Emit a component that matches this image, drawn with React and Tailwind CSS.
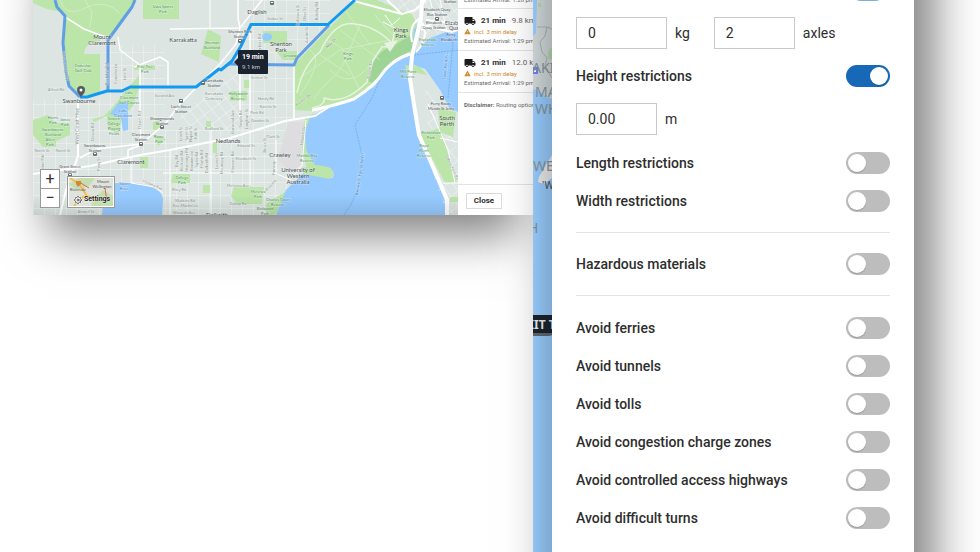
import { MdLocalShipping, MdWarning } from "react-icons/md";
import { FiSettings } from "react-icons/fi";

const STREET = "#8b9492";
const GREEN = "#4e8f63";
const PLACE = "#464c50";
const WATER = "#3f7fb8";

// x, y, size, colour, lines, rotation
const labels = [
  [102, 39, 6, PLACE, ["Mount", "Claremont"]],
  [79, 103, 6, PLACE, ["Swanbourne"]],
  [183, 42, 6, PLACE, ["Karrakatta"]],
  [257, 14, 6, PLACE, ["Daglish"]],
  [281, 46, 6, PLACE, ["Shenton", "Park"]],
  [401, 32, 6, PLACE, ["Kings", "Park"]],
  [131, 164, 6, PLACE, ["Claremont"]],
  [228, 143, 6, PLACE, ["Nedlands"]],
  [280, 157, 6, PLACE, ["Crawley"]],
  [298, 172, 6, PLACE, ["University of", "Western", "Australia"]],
  [447, 120, 6, PLACE, ["South", "Perth"]],
  [163, 8, 4, GREEN, ["Uwa Sports", "Park"]],
  [83, 67, 4, GREEN, ["Cottesloe", "Golf Club"]],
  [145, 68, 4, GREEN, ["Pine Tree", "Park"]],
  [129, 94, 4, GREEN, ["Lake", "Claremont", "Golf Course"]],
  [53, 119, 4, GREEN, ["Harris", "Park"]],
  [65, 121, 4, GREEN, ["Jones", "Park"]],
  [53, 131, 4, GREEN, ["Swanbourne", "Bushland"]],
  [50, 141, 4, GREEN, ["Allen", "Park"]],
  [114, 120, 4, GREEN, ["Scotch", "College", "Playing", "Fields"]],
  [159, 138, 4, GREEN, ["Rowe", "Park"]],
  [212, 44, 4, GREEN, ["Shenton", "Bushland"]],
  [290, 57, 4, GREEN, ["Onslow"]],
  [238, 95, 4, GREEN, ["Hollywood", "Reserve"]],
  [214, 95, 4, STREET, ["Karrakatta", "Cemetery"]],
  [348, 55, 4, GREEN, ["Kings", "Park"]],
  [428, 41, 4, GREEN, ["Esplanade", "Reserve"]],
  [408, 73, 4, GREEN, ["Mill Point", "Reserve"]],
  [431, 134, 4, GREEN, ["Richardson", "Park"]],
  [424, 147, 4, GREEN, ["Royal", "Perth", "Reserve"]],
  [307, 157, 4, GREEN, ["Matilda Bay", "Reserve"]],
  [182, 179, 4, GREEN, ["College", "Park"]],
  [258, 193, 4, GREEN, ["Melvista", "Park"]],
  [278, 201, 4, GREEN, ["Charles Court", "Reserve"]],
  [265, 210, 4, GREEN, ["Birdwood", "Park"]],
  [240, 33, 4, PLACE, ["Shenton Park", "Station"]],
  [214, 82, 4, PLACE, ["Karrakatta", "Station"]],
  [181, 108, 4, PLACE, ["Loch Street", "Station"]],
  [162, 120, 4, PLACE, ["Showgrounds", "Station"]],
  [141, 136, 4, PLACE, ["Claremont", "Station"]],
  [95, 147, 4, PLACE, ["Swanbourne", "Station"]],
  [70, 168, 4, PLACE, ["Grant Street", "Station"]],
  [437, 11, 4, PLACE, ["Elizabeth Quay", "Bus Station"]],
  [434, 24, 4, PLACE, ["Elizabeth", "Quay Station"]],
  [455, 25, 5, PLACE, ["Elizabeth", "Quay"]],
  [451, 36, 4, PLACE, ["Ferry", "Elizabeth Q"]],
  [450, 3, 4, PLACE, ["Station"]],
  [441, 105, 4, PLACE, ["Ferry Route", "Mends St Jetty"]],
  [124, 185, 4, WATER, ["Swan", "River"]],
  [123, 112, 4, WATER, ["Lake", "Claremont"]],
  [56, 91, 4, STREET, ["Alfred Rd"]],
  [165, 97, 4, STREET, ["Second Ave"]],
  [275, 20, 4, STREET, ["Stoker St"]],
  [259, 79, 4, STREET, ["Verdun St"]],
  [266, 100, 4, STREET, ["Hardy Rd"]],
  [268, 108, 4, STREET, ["Karella St"]],
  [257, 114, 4, STREET, ["Park Rd"]],
  [260, 122, 4, STREET, ["Gordon St"]],
  [214, 130, 4, STREET, ["Bedford St"]],
  [246, 147, 4, STREET, ["Edward St"]],
  [246, 160, 4, STREET, ["Elizabeth St"]],
  [238, 187, 4, STREET, ["Melvista Ave"]],
  [238, 205, 4, STREET, ["Gallop Rd"]],
  [179, 191, 4, STREET, ["Riley Rd"]],
  [185, 202, 4, STREET, ["Watkins Rd", "Tree Martin Ln"]],
  [184, 214, 4, STREET, ["Waratah Ave"]],
  [217, 217, 6, PLACE, ["Dalkeith"]],
  [42, 152, 4, STREET, ["North St"]],
  [63, 152, 4, STREET, ["North St"]],
  [86, 213, 4, STREET, ["Airwell St"]],
  [273, 138, 4, STREET, ["Clark St"]],
  [152, 186, 4, STREET, ["Victoria Ave"], 24],
  [64, 66, 4, STREET, ["West Coast Hwy"], 82],
  [79, 126, 5, STREET, ["West Coast Hwy"], -90],
  [108, 74, 4, STREET, ["Rochdale Rd"], -90],
  [117, 74, 4, STREET, ["Cornelin Ln"], -90],
  [126, 74, 4, STREET, ["Lisle St"], -90],
  [94, 132, 4, STREET, ["Devon Rd"], -90],
  [141, 120, 4, STREET, ["Davies Rd"], -90],
  [100, 164, 4, STREET, ["Parry St"], -90],
  [44, 164, 4, STREET, ["Marine Pde"], -90],
  [178, 161, 4, STREET, ["Bay Rd"], -90],
  [183, 161, 4, STREET, ["Rockton Rd"], -90],
  [188, 160, 4, STREET, ["Waroonga Rd"], -90],
  [193, 161, 4, STREET, ["Kinninmont"], -90],
  [198, 160, 4, STREET, ["Taylor Rd"], -90],
  [203, 159, 4, STREET, ["Martin Rd"], -90],
  [208, 163, 4, STREET, ["Dalkeith Rd"], -90],
  [218, 161, 4, STREET, ["Louise St"], -90],
  [223, 163, 4, STREET, ["Mountjoy Rd"], -90],
  [234, 162, 4, STREET, ["Florence Rd"], -90],
  [182, 134, 4, STREET, ["Leach St"], -90],
  [188, 134, 4, STREET, ["Tyrell St"], -90],
  [192, 134, 4, STREET, ["Napier St"], -90],
  [197, 133, 4, STREET, ["Kirk St"], -90],
  [234, 122, 4, STREET, ["Burwood Ave"], -90],
  [242, 119, 4, STREET, ["Smyth Rd"], -90],
  [248, 119, 4, STREET, ["Langham St"], -90],
  [275, 168, 4, STREET, ["Fairway"], -90],
  [266, 145, 4, STREET, ["Bruce St"], -90],
  [261, 44, 4, STREET, ["Herbert Rd"], -90],
  [299, 15, 4, STREET, ["Robinson St"], -90],
  [306, 14, 4, STREET, ["Olive St"], -90],
  [308, 35, 4, STREET, ["Austin St"], -90],
  [318, 11, 4, STREET, ["Rokeby Rd"], -90],
  [332, 44, 4, STREET, ["May Dr"], -45],
  [371, 70, 4, STREET, ["Forrest Dr"], -80],
  [304, 101, 4, STREET, ["Forrest Dr"], -36],
  [304, 136, 4, STREET, ["Hackett Dr"], -82],
  [272, 186, 4, STREET, ["Princess"], -50],
  [451, 168, 4, STREET, ["Labouchere Rd"], 66],
  [361, 174, 4, WATER, ["Barrack St-Fremantle Fry"], -82],
  [447, 66, 4, WATER, ["South Perth Fry"], -84],
];

const stations = [[203, 83], [240, 41], [95, 154], [141, 144], [162, 127], [70, 175], [181, 101], [272, 3], [437, 19], [442, 98]];

const trips = [
  { time: "21 min", distance: "9.8 km" },
  { time: "21 min", distance: "12.0 km" },
];

const avoidOptions = [
  "Avoid ferries",
  "Avoid tunnels",
  "Avoid tolls",
  "Avoid congestion charge zones",
  "Avoid controlled access highways",
  "Avoid difficult turns",
];

function MapLabel({ label }) {
  const [x, y, size, color, lines, angle = 0] = label;
  return (
    <text
      x={x}
      y={y}
      fontSize={size}
      fill={color}
      textAnchor="middle"
      stroke="#fff"
      strokeOpacity=".4"
      strokeWidth="1"
      paintOrder="stroke"
      transform={`rotate(${angle} ${x} ${y})`}
    >
      {lines.map((line, i) => (
        <tspan key={i} x={x} dy={i === 0 ? 0 : size + (size < 5 ? 1 : 0)}>
          {line}
        </tspan>
      ))}
    </text>
  );
}

function RouteMap() {
  return (
    <svg
      viewBox="33 0 425 215"
      preserveAspectRatio="xMinYMin slice"
      className="block h-full w-full font-[Lato,sans-serif]"
      aria-label="Route map"
    >
      <defs>
        <pattern id="blocks" width="11" height="13" patternUnits="userSpaceOnUse">
          <path d="M0 0H11M0 0V13" stroke="#f3f6f5" strokeWidth="1" fill="none" />
        </pattern>
        <pattern id="blocksTilted" width="9" height="12" patternUnits="userSpaceOnUse" patternTransform="rotate(-38)">
          <path d="M0 0H9M0 0V12" stroke="#f3f6f5" strokeWidth="1" fill="none" />
        </pattern>
        <linearGradient id="edge" x1="0" y1="0" x2="0" y2="1">
          <stop offset="0" stopColor="#000" stopOpacity="0" />
          <stop offset="1" stopColor="#000" stopOpacity=".1" />
        </linearGradient>
      </defs>
      <rect x="33" width="425" height="215" fill="#dce5e1" />
      <path d="M33 100H103V45H165V130H320V215H33Z" fill="url(#blocks)" />
      <path d="M245 0H330V65H294V130H240V70Z" fill="url(#blocks)" />
      <path d="M180 115L240 65V130H180Z" fill="url(#blocksTilted)" />
      <path d="M390 0H458V35H420Z" fill="url(#blocksTilted)" />
      <path d="M288 122H305L302 165L290 172L278 160Z" fill="#dddddf" />

      {/* parks */}
      <g fill="#bbe5a9">
        <path d="M33 0H56L61 12L47 9L33 3Z" />
        <path d="M55 0H135L109 37L84 29L65 17Z" />
        <path d="M65 17L84 29L100 36V41Q85 42 84 54H100V93L80 96L69 84L64 50Z" />
        <path d="M143 0H178V19H143Z" />
        <path d="M170 0H179V19H170Z" />
        <path d="M112 108L139 75V88L133 106L122 117L119 133L108 130L107 116L94 122L92 119L104 116Z" />
        <path d="M33 120L48 115L55 123H70V135L56 141V147H43L33 135Z" />
        <path d="M208 29L221 36L219 62L201 54Z" />
        <path d="M263 31H287V43H263Z" />
        <path d="M276 51H297V60H283Z" />
        <path d="M230 91H247V101H230Z" />
        <path d="M244 80H250V88H244Z" />
        <path d="M153 122L160 120V130H153Z" />
        <path d="M140 157H148V168H140Z" />
        <path d="M153 134L166 139L158 146Z" />
        <path d="M173 174H190V183H171Z" />
        <path d="M203 185H210V193H203Z" />
        <path d="M234 187H264L262 204H237L231 196Z" />
        <path d="M266 215V204L285 192L292 185L295 192L278 210L275 215Z" />
        <path d="M206 121H211V127H206Z" />
        <path d="M213 141H217V153H213Z" />
        <path d="M134 65H155V70H134Z" />
        <path d="M305 118L314 113L308 132L309 150L316 166H306L302 150Z" />
      </g>
      <path d="M294 110V65L356 0H377L400 10L412 14L417 24L414 52L395 59L384 69L374 84L354 99L328 106L312 111Z" fill="#bbe5a9" />
      <path d="M374 84Q362 80 372 66Q378 50 395 45L412 34L412 50L395 59L384 69Z" fill="#9fd497" />

      {/* water */}
      <g fill="#97cbff">
        <path d="M276 215L286 190L295 181L305 172L332 178Q336 174 330 168L315 165L306 150L305 132L310 117L328 107L354 100L375 86L386 70L397 61L411 55L414 66L409 78L414 105L418 135L430 155L443 190L448 215Z" />
        <path d="M411 62L414 30L418 24L416 50L430 38L446 32L458 30V112L449 108L440 90L425 69L416 66Z" />
        <path d="M102 215Q102 200 112 184Q120 181 140 184Q162 188 163 199L162 215Z" />
        <path d="M110 114L118 103L128 101V130L123 131L121 118Z" />
        <ellipse cx="267" cy="37" rx="5" ry="4" />
      </g>
      <path d="M302 168Q315 162 330 168Q337 174 330 179L304 174Z" fill="#bbe5a9" />
      <path d="M414 66L425 69L440 90L449 108L458 112V215H448L443 190L418 135Z" fill="#dce5e1" />
      <path d="M425 85L440 108L458 150V215H448L430 165Z" fill="url(#blocksTilted)" />
      <path d="M405 65L420 67L427 75L417 73L408 77Z" fill="#bbe5a9" />
      <path d="M419 134L440 128L457 183H445Z" fill="#bbe5a9" />
      <path d="M438 108L456 112L453 137L440 132ZM450 197H458V202H450Z" fill="#bbe5a9" />

      {/* ferry lines */}
      <path d="M344 215Q362 190 363 160L355 125L372 98L385 68L405 56L458 50" fill="none" stroke="#6aa5e0" strokeDasharray="2 1" strokeWidth=".7" />
      <path d="M453 42L448 98" fill="none" stroke="#6aa5e0" strokeDasharray="2 1" strokeWidth=".7" />

      {/* park trails */}
      <g fill="none" stroke="#d8eccd" strokeWidth=".8">
        <path d="M60 0Q66 18 85 8T120 13M85 0L92 12L90 27M300 95Q325 60 310 50M325 40Q360 50 335 75T315 100M340 30L380 60M345 10L370 45M330 70Q350 90 370 65" />
        <path d="M297 80L340 50L390 40M360 25L345 60L360 90M375 15L395 38M320 55L350 75" />
      </g>

      {/* major roads */}
      <g fill="none" stroke="#fff" strokeWidth="2" strokeLinejoin="round">
        <path d="M33 174L90 166L140 155L170 150L230 138L285 121L315 116L332 105" />
        <path d="M78 100V156L66 190L60 215" />
        <path d="M65 17L84 29L108 38" strokeWidth="1.5" />
        <path d="M118 37L120 50L140 65V115L141 145L128 150V158" strokeWidth="1.5" />
        <path d="M134 67L160 57L168 62V87M238 0V18L240 28L236 44L220 64L180 104L165 124L141 144L96 149L80 158" strokeWidth="1.5" />
        <path d="M170 29L240 28L262 0M250 24V115M294 65V120M240 72V118" strokeWidth="1.5" />
        <path d="M350 0L387 10L402 14L415 10L426 0M387 0L402 14" />
        <path d="M312 110Q330 107 354 99Q375 86 385 70Q396 58 410 54" strokeWidth="3" />
        <path d="M297 93Q303 65 320 52Q335 20 355 24Q375 26 392 43M312 108Q326 105 324 98Q345 105 367 82L373 60L382 47L394 46" stroke="#e8f3e2" strokeWidth="1.5" />
        <path d="M422 0L421 18L412 56L410 79Q414 105 419 135L430 160L447 200V215" strokeWidth="4" />
        <path d="M421 18Q408 24 412 42M421 25L452 32L458 30M426 20L458 24M416 52Q430 38 422 22M421 30L437 20" />
        <path d="M385 15L392 25L400 18M383 22L395 28L392 45M430 0L437 25M440 0L447 32" strokeWidth="1" />
        <path d="M163 173H275L291 180M276 140V173M306 120L302 165L292 178" strokeWidth="1" />
        <path d="M131 158V183L155 187L163 193M210 0V30M211 130V215M250 130V185M170 215V150" strokeWidth="1" />
        <path d="M443 183H458M440 138L458 142M428 104L448 150L455 183" strokeWidth="1" />
      </g>
      <path d="M384 43L398 40L390 52Z" fill="#e8f1e2" />

      {/* alternative routes */}
      <g fill="none" stroke="#5f9fe2" strokeWidth="3" strokeLinejoin="round">
        <path d="M55 0L57 7L65 16L63 43L66 72L69 86L80 97" />
        <path d="M135 0L132 7L108 40V90" />
        <path d="M228 64L294 65L297 58L329 25" />
      </g>
      <path
        d="M80 97H87L107 91H122L130 87H196L219 69L221 70L232 61L241 46L251 24.500H328L355 0"
        fill="none"
        stroke="#129af3"
        strokeWidth="3"
        strokeLinejoin="round"
      />

      {stations.map(([x, y]) => (
        <g key={`${x}-${y}`}>
          <rect x={x - 2} y={y - 2} width="4" height="4" rx="1" fill="#6b7376" />
          <path d={`M${x - 1} ${y - 1}h2v1h-2z`} fill="#fff" />
        </g>
      ))}
      {labels.map((label, i) => (
        <MapLabel key={i} label={label} />
      ))}

      {/* start pin */}
      <path d="M81 97Q77 93 77 90A4 4 0 0 1 85 90Q85 93 81 97Z" fill="#555b61" />
      <circle cx="81" cy="90" r="1.500" fill="#fff" />
      <rect x="33" y="195" width="425" height="20" fill="url(#edge)" />
    </svg>
  );
}

function TripCard({ time, distance }) {
  return (
    <li className="h-[42px] border-t border-[#e3e3e3] px-[6px] pt-[7px] text-[6px] leading-[9px]">
      <div className="flex h-[9px] items-center text-[8px]">
        <MdLocalShipping className="mr-[5px] h-[12px] w-[12px] shrink-0 text-[#1c1c1c]" />
        <strong className="font-bold text-[#2f2f2f]">{time}</strong>
        <span className="ml-[6px] text-[#666]">{distance}</span>
      </div>
      <div className="mt-[2px] flex items-center text-[#cf8a2e]">
        <MdWarning className="mr-[3px] h-[7px] w-[7px]" />
        incl. 3 min delay
      </div>
      <p className="text-[#6d6d6d]">Estimated Arrival: 1:29 pm</p>
    </li>
  );
}

function Switch({ label, on }) {
  return (
    <label className="flex h-[38px] items-center justify-between text-[14px] font-medium">
      {label}
      <input
        type="checkbox"
        role="switch"
        defaultChecked={on}
        className="relative h-[22px] w-[44px] shrink-0 appearance-none rounded-full bg-[#bdbdbd] before:absolute before:top-[2px] before:left-[2px] before:h-[18px] before:w-[18px] before:rounded-full before:bg-white before:shadow-[0_1px_1px_rgba(0,0,0,0.2)] checked:bg-[#1769b8] checked:before:left-[24px]"
      />
    </label>
  );
}

function NumberField({ value, unit, width }) {
  return (
    <label className="flex items-center gap-[8px] text-[14px]">
      <input
        type="text"
        defaultValue={value}
        className={`h-[32px] border border-[#c9c9c9] bg-white px-[11px] ${width}`}
      />
      {unit}
    </label>
  );
}

function PhoneMap() {
  return (
    <svg className="absolute inset-0 h-full w-full font-['Noto_Sans',sans-serif]" aria-hidden="true">
      <defs>
        <linearGradient id="shade">
          <stop offset="0" stopColor="#000" stopOpacity="0" />
          <stop offset="1" stopColor="#000" stopOpacity=".13" />
        </linearGradient>
      </defs>
      <rect width="100%" height="100%" fill="#90c2f1" />
      <path d="M4 0H19V99L13 97L8 92L0 89V36L3 33Z" fill="#c6cdce" />
      <path d="M4 27H14L19 29M14 27L12 36L7 42L9 52L14 58L12 66L19 78" fill="none" stroke="#a3a9aa" />
      <path d="M16 50L19 47V60L15 58ZM5 3H8V7H5Z" fill="#a8cfa0" />
      <path d="M19 155L14 163L6 177L5 182L11 184L19 178Z" fill="#dedfdf" />
      <path d="M0 67H5V74H0Z" fill="#6a78e8" />
      <path d="M1 70H3V72H1Z" fill="#fff" />
      <g fill="#7f8d98" fontSize="14">
        <text x="-1" y="73">AKI</text>
        <text x="2" y="97">MA</text>
        <text x="2" y="114">WH</text>
        <text x="0" y="171">WE</text>
        <text x="-5" y="233">H</text>
      </g>
      <text x="9" y="189" fill="#484d50" fontSize="10">'W</text>
      <path d="M-4 315H24V334L16 336H-4Z" fill="#59636c" />
      <path d="M-4 315H24V333H-4Z" fill="#1a222b" />
      <text x="-7" y="329" fill="#dfe3e7" fontSize="12" fontWeight="700">KIT T</text>
      <rect width="19" height="100%" fill="url(#shade)" />
    </svg>
  );
}

export default function App() {
  return (
    <div className="flex min-h-screen items-stretch overflow-hidden bg-white pr-[66px] font-[Roboto,sans-serif] text-[#2e2e2e]">
      <main className="min-w-0 flex-1 pl-[33px]">
        <section className="-mt-[80px] bg-white pt-[80px] shadow-[0_35px_44px_-15px_rgba(0,0,0,0.5)]">
          <div className="flex h-[215px]">
            <div className="relative min-w-0 flex-1 overflow-hidden">
              <RouteMap />
              <div className="absolute top-[50px] left-[205px] rounded-[1px] bg-[#1b2330] px-[4px] py-[3px] text-[7px] leading-[9px] text-white before:absolute before:top-[8px] before:-left-[4px] before:border-y-4 before:border-r-4 before:border-y-transparent before:border-r-[#1b2330]">
                <strong className="block font-bold">19 min</strong>
                <span className="block text-[6px] text-[#c8ccd2]">9.1 km</span>
              </div>
              <div className="absolute bottom-[7px] left-[7px] flex items-end gap-[7px]">
                <div className="flex w-[20px] flex-col border border-[#999] bg-white text-[16px] leading-[18px] text-[#333]">
                  <button aria-label="Zoom in" className="h-[19px] border-b border-[#999]">+</button>
                  <button aria-label="Zoom out" className="h-[18px]">−</button>
                </div>
                <button className="relative h-[32px] w-[48px] overflow-hidden border border-[#999] bg-white p-px">
                  <svg viewBox="0 0 44 28" className="h-full w-full font-[Lato,sans-serif]" aria-hidden="true">
                    <rect width="44" height="28" fill="#dfe3dc" />
                    <path d="M0 6L10 0H26L20 8L8 12ZM26 20L34 12L44 18V28H22Z" fill="#c3dfb0" />
                    <path d="M1 0L10 6L18 18L27 21M5 28L15 18" fill="none" stroke="#f4bd45" strokeWidth="2" />
                    <path d="M10 4L20 10M36 10L38 24" stroke="#e0674f" strokeWidth="1" />
                    <path d="M7 3H12V6L9 9L7 6Z" fill="#dc813c" />
                    <text x="34" y="5" fontSize="4" fill="#555" textAnchor="middle">Mount</text>
                    <text x="33" y="10" fontSize="4" fill="#555" textAnchor="middle">Wellington</text>
                    <text x="9" y="13" fontSize="4" fill="#555" textAnchor="middle">Rivervale</text>
                  </svg>
                  <span className="absolute bottom-[3px] left-[6px] flex items-center gap-[2px] text-[7px] leading-[9px] font-bold text-[#222] [text-shadow:0_0_1px_#fff,0_0_2px_#fff]">
                    <FiSettings className="h-[8px] w-[8px] rounded-full bg-white" />
                    Settings
                  </span>
                </button>
              </div>
            </div>
            <aside className="flex w-[75px] flex-col overflow-hidden bg-white whitespace-nowrap">
              <p className="-mt-[5px] h-[13px] px-[6px] text-[6px] leading-[9px] text-[#6d6d6d]">
                Estimated Arrival: 1:28 pm
              </p>
              <ul>
                {trips.map((trip) => (
                  <TripCard key={trip.distance} {...trip} />
                ))}
              </ul>
              <p className="border-t border-[#e3e3e3] px-[6px] pt-[7px] text-[6px] leading-[9px] text-[#6d6d6d]">
                <strong>Disclaimer:</strong> Routing options
              </p>
              <div className="mt-auto border-t border-[#e3e3e3] px-[8px] pt-[8px] pb-[6px]">
                <button className="block h-[16px] w-[36px] border border-[#dcdcdc] bg-white text-[8px] leading-[14px] font-bold">
                  Close
                </button>
              </div>
            </aside>
          </div>
        </section>
      </main>

      <section className="relative z-10 -my-[80px] flex w-[381px] shrink-0 py-[80px] shadow-[20px_0_44px_rgba(0,0,0,0.5)]">
        <div className="relative w-[19px] shrink-0">
          <PhoneMap />
        </div>
        <form className="-my-[80px] flex-1 bg-white px-[24px] pt-[60px] pb-[90px]">
          <div className="flex h-[21px] items-end justify-end pr-[4px]">
            <input
              type="checkbox"
              role="switch"
              aria-label="Weight restrictions"
              defaultChecked
              className="h-[22px] w-[36px] appearance-none rounded-full bg-[#7fb0dd]"
            />
          </div>
          <div className="mt-[16px] flex gap-[24px]">
            <NumberField value="0" unit="kg" width="w-[91px]" />
            <NumberField value="2" unit="axles" width="w-[81px]" />
          </div>
          <div className="mt-[8px]">
            <Switch label="Height restrictions" on />
          </div>
          <div className="mt-[8px] mb-[9px]">
            <NumberField value="0.00" unit="m" width="w-[81px]" />
          </div>
          <Switch label="Length restrictions" />
          <Switch label="Width restrictions" />
          <hr className="my-[12px] border-[#e4e4e4]" />
          <Switch label="Hazardous materials" />
          <hr className="mt-[12px] mb-[13px] border-[#e4e4e4]" />
          {avoidOptions.map((option) => (
            <Switch key={option} label={option} />
          ))}
        </form>
      </section>
    </div>
  );
}
